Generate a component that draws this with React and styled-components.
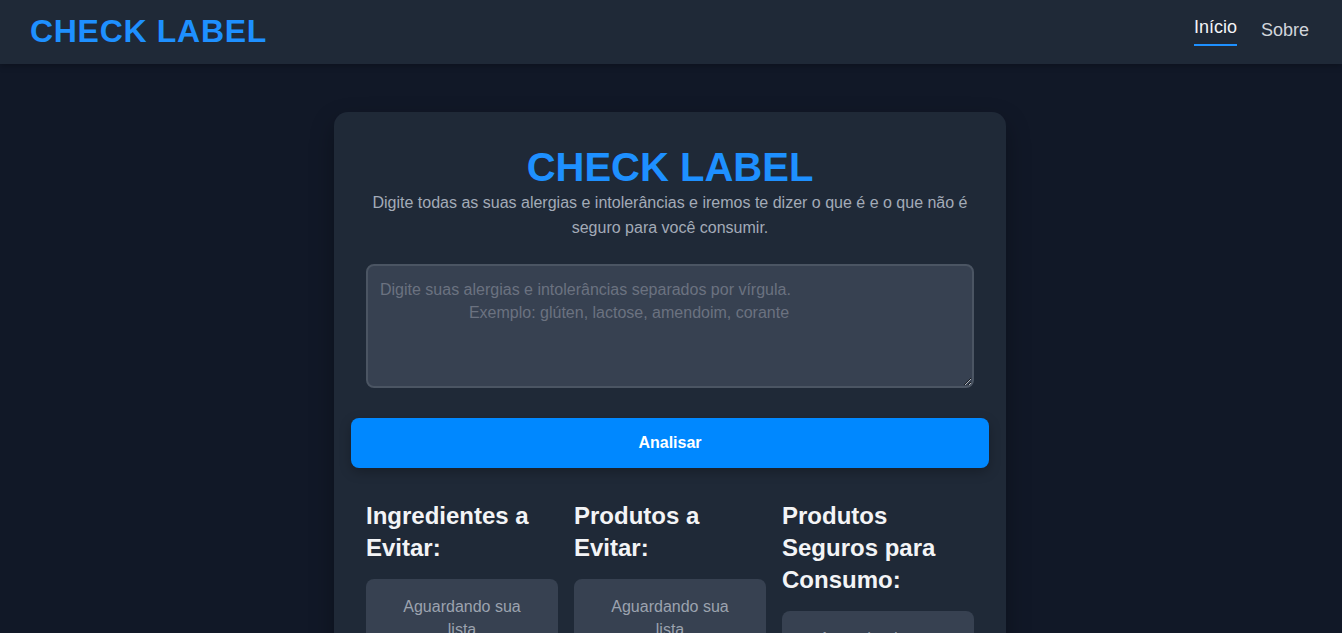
import React from "react";
import styled, { createGlobalStyle } from "styled-components";

const Global = createGlobalStyle`
  html, body { margin: 0; padding: 0; background: #111827; }
  body { font-family: "Liberation Sans", Arial, sans-serif; color: #e5e7eb; }
  * { box-sizing: border-box; }
`;

const Header = styled.header`
  height: 64px;
  background: #1f2937;
  display: flex;
  align-items: center;
  justify-content: space-between;
  padding: 0 33px 0 30px;
  box-shadow: 0 2px 6px rgba(0, 0, 0, 0.25);
`;

const Logo = styled.div`
  font-size: 32px;
  font-weight: 900;
  color: #1e90ff;
  letter-spacing: 0.7px;
  line-height: 1;
  margin-top: -2px;
`;

const Nav = styled.nav`
  display: flex;
  align-items: center;
  gap: 24px;
  margin-top: -3px;
`;

const NavLink = styled.a`
  font-size: 18px;
  line-height: 21px;
  text-decoration: none;
  cursor: pointer;
  color: ${(p) => (p.$active ? "#f3f4f6" : "#d1d5db")};
  padding-bottom: ${(p) => (p.$active ? "6px" : "0")};
  border-bottom: ${(p) => (p.$active ? "2px solid #1e90ff" : "none")};
  transform: ${(p) => (p.$active ? "translateY(1px)" : "none")};
`;

const Main = styled.main`
  display: flex;
  justify-content: center;
  padding: 48px 2px 0 0;
`;

const Card = styled.section`
  width: 672px;
  background: #1f2937;
  border-radius: 14px;
  padding: 32px 17px 40px;
  box-shadow: 0 10px 25px rgba(0, 0, 0, 0.3);
  display: flex;
  flex-direction: column;
`;

const Title = styled.h1`
  margin: 0;
  text-align: center;
  font-size: 40px;
  line-height: 46px;
  font-weight: 900;
  color: #1e90ff;
`;

const Subtitle = styled.p`
  margin: 0 0 24px;
  padding: 0 15px;
  text-align: center;
  font-size: 16px;
  line-height: 25px;
  color: #a3abb7;
`;

const TextArea = styled.textarea`
  display: block;
  margin: 0 15px;
  height: 124px;
  resize: vertical;
  background: #374151;
  border: 2px solid #4b5563;
  border-radius: 8px;
  padding: 12px 12px;
  font-family: "Liberation Sans", Arial, sans-serif;
  font-size: 16px;
  line-height: 23px;
  color: #e5e7eb;
  outline: none;
  &::placeholder {
    color: #6b7280;
    white-space: pre-wrap;
  }
`;

const Button = styled.button`
  margin-top: 30px;
  height: 50px;
  border: none;
  border-radius: 8px;
  background: #0088ff;
  color: #ffffff;
  font-family: "Liberation Sans", Arial, sans-serif;
  font-size: 16px;
  font-weight: 700;
  cursor: pointer;
  box-shadow: 0 4px 12px rgba(0, 0, 0, 0.25);
`;

const Columns = styled.div`
  margin: 32px 15px 0;
  display: grid;
  grid-template-columns: repeat(3, 1fr);
  gap: 16px;
  align-items: start;
`;

const Column = styled.div`
  display: flex;
  flex-direction: column;
`;

const ColTitle = styled.h2`
  margin: 0 0 15px;
  font-size: 24px;
  line-height: 32px;
  font-weight: 700;
  color: #f3f4f6;
`;

const ResultBox = styled.div`
  background: #374151;
  border-radius: 8px;
  padding: 16px 24px;
  text-align: center;
  font-size: 16px;
  line-height: 23px;
  color: #9ca3af;
`;

const placeholder =
  "Digite suas alergias e intolerâncias separados por vírgula.\n" +
  "                    Exemplo: glúten, lactose, amendoim, corante";

const columns = [
  "Ingredientes a Evitar:",
  "Produtos a Evitar:",
  "Produtos Seguros para Consumo:",
];

export default function App() {
  return (
    <>
      <Global />
      <Header>
        <Logo>CHECK LABEL</Logo>
        <Nav>
          <NavLink $active>Início</NavLink>
          <NavLink>Sobre</NavLink>
        </Nav>
      </Header>
      <Main>
        <Card>
          <Title>CHECK LABEL</Title>
          <Subtitle>
            Digite todas as suas alergias e intolerâncias e iremos te dizer o que é e o que não é seguro para você consumir.
          </Subtitle>
          <TextArea placeholder={placeholder} />
          <Button>Analisar</Button>
          <Columns>
            {columns.map((c) => (
              <Column key={c}>
                <ColTitle>{c}</ColTitle>
                <ResultBox>Aguardando sua lista</ResultBox>
              </Column>
            ))}
          </Columns>
        </Card>
      </Main>
    </>
  );
}
